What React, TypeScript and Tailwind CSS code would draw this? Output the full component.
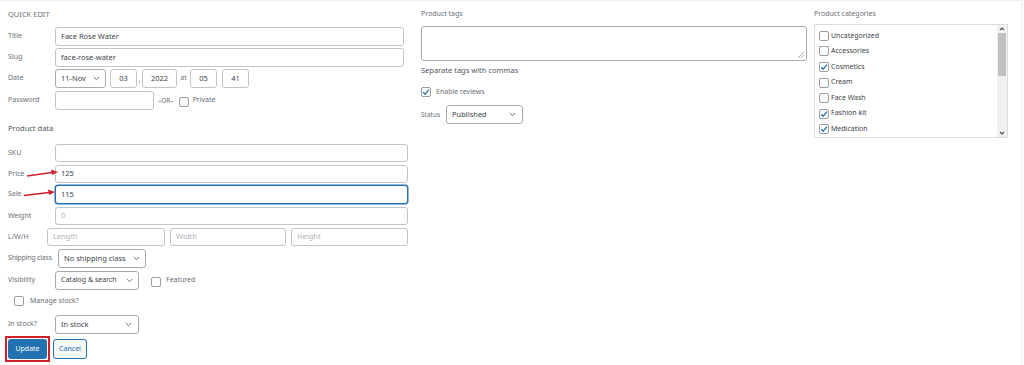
import React from "react";

const font = { fontFamily: '"Noto Sans", "Open Sans", sans-serif' };

function Chevron() {
  return (
    <svg width="7" height="5" viewBox="0 0 7 5" className="ml-auto shrink-0">
      <path d="M0.8 1 L3.5 3.7 L6.2 1" fill="none" stroke="#6b7075" strokeWidth="1" />
    </svg>
  );
}

function Box({ checked = false }: { checked?: boolean }) {
  return (
    <span className="relative inline-flex h-[10px] w-[10px] shrink-0 rounded-[2px] border border-[#9a9da1] bg-white">
      {checked && (
        <svg width="10" height="10" viewBox="0 0 10 10" className="absolute left-[-1px] top-[-1px]">
          <path d="M2.2 5.2 L4.1 7.2 L8 2.6" fill="none" stroke="#2271b1" strokeWidth="1.3" />
        </svg>
      )}
    </span>
  );
}

function Input({ value = "", placeholder = "", className = "", focus = false }: { value?: string; placeholder?: string; className?: string; focus?: boolean }) {
  return (
    <div
      className={`flex items-center rounded-[3px] border bg-white px-[5px] text-[7.5px] ${
        focus ? "border-[#2271b1] shadow-[0_0_0_0.5px_#2271b1]" : "border-[#c3c4c7]"
      } ${className}`}
    >
      {value ? <span className="text-[#3c434a]">{value}</span> : <span className="text-[#b0b3b6]">{placeholder}</span>}
    </div>
  );
}

function Select({ value, className = "" }: { value: string; className?: string }) {
  return (
    <div className={`flex items-center whitespace-nowrap rounded-[3px] border border-[#a7aaad] bg-white pl-[5px] pr-[5px] text-[7.5px] text-[#3c434a] ${className}`}>
      <span>{value}</span>
      <Chevron />
    </div>
  );
}

function Label({ children, w = "w-[47px]" }: { children: React.ReactNode; w?: string }) {
  return <span className={`${w} shrink-0 whitespace-nowrap text-[7px] text-[#6b7075]`}>{children}</span>;
}

export default function App() {
  const cats: [string, boolean][] = [
    ["Uncategorized", false],
    ["Accessories", false],
    ["Cosmetics", true],
    ["Cream", false],
    ["Face Wash", false],
    ["Fashion kit", true],
    ["Medication", true],
  ];
  const small = "flex h-[19px] items-center justify-center rounded-[3px] border border-[#c3c4c7] text-[7.5px] text-[#3c434a]";
  return (
    <div className="relative h-[365px] w-[1024px] overflow-hidden bg-white" style={font}>
      <div className="flex h-[365px] w-[1022px] border-t border-r border-[#eeeeee]">
        {/* Left column */}
        <div className="flex w-[413px] shrink-0 flex-col pl-[8px]">
          <div className="mt-[8px] h-[10px] text-[7.5px] leading-[10px] text-[#6b7075]">QUICK EDIT</div>
          <div className="mt-[8px] flex h-[19px] items-center">
            <Label>Title</Label>
            <Input value="Face Rose Water" className="h-[19px] w-[349px]" />
          </div>
          <div className="mt-[2px] flex h-[19px] items-center">
            <Label>Slug</Label>
            <Input value="face-rose-water" className="h-[19px] w-[349px]" />
          </div>
          <div className="mt-[2px] flex h-[19px] items-center">
            <Label>Date</Label>
            <Select value="11-Nov" className="h-[19px] w-[51px]" />
            <div className={`ml-[4px] w-[27px] ${small}`}>03</div>
            <span className="w-[5px] text-center text-[8px] text-[#6b7075]">,</span>
            <div className={`w-[35px] ${small}`}>2022</div>
            <span className="w-[13px] text-center text-[7px] text-[#6b7075]">at</span>
            <div className={`w-[27px] ${small}`}>05</div>
            <span className="w-[5px]" />
            <div className={`w-[27px] ${small}`}>41</div>
          </div>
          <div className="mt-[3px] flex h-[19px] items-center">
            <Label>Password</Label>
            <Input className="h-[19px] w-[99px]" />
            <span className="ml-[4px] text-[6.5px] text-[#6b7075]">–OR–</span>
            <span className="ml-[5px]"><Box /></span>
            <span className="ml-[4px] text-[7px] text-[#6b7075]">Private</span>
          </div>
          <div className="mt-[12px] h-[12px] text-[7.5px] leading-[12px] text-[#50575e]">Product data</div>
          <div className="mt-[10px] flex h-[18px] items-center">
            <Label>SKU</Label>
            <Input className="h-[18px] w-[353px]" />
          </div>
          <div className="mt-[3px] flex h-[18px] items-center">
            <Label>Price</Label>
            <Input value="125" className="h-[18px] w-[353px]" />
          </div>
          <div className="mt-[2px] flex h-[19px] items-center">
            <Label>Sale</Label>
            <Input value="115" focus className="h-[19px] w-[353px]" />
          </div>
          <div className="mt-[3px] flex h-[18px] items-center">
            <Label>Weight</Label>
            <Input placeholder="0" className="h-[18px] w-[353px]" />
          </div>
          <div className="mt-[3px] flex h-[18px] items-center">
            <Label w="w-[39px]">L/W/H</Label>
            <Input placeholder="Length" className="h-[18px] w-[118px]" />
            <Input placeholder="Width" className="ml-[5px] h-[18px] w-[116px]" />
            <Input placeholder="Height" className="ml-[5px] h-[18px] w-[117px]" />
          </div>
          <div className="mt-[3px] flex h-[19px] items-center">
            <span className="w-[50px] shrink-0 whitespace-nowrap text-[7px] tracking-[-0.2px] text-[#6b7075]">Shipping class</span>
            <Select value="No shipping class" className="h-[19px] w-[88px]" />
          </div>
          <div className="mt-[3px] flex h-[19px] items-center">
            <Label>Visibility</Label>
            <Select value="Catalog & search" className="h-[19px] w-[84px] text-[7px]" />
            <span className="ml-[12px]"><Box /></span>
            <span className="ml-[5px] text-[7px] text-[#6b7075]">Featured</span>
          </div>
          <div className="mt-[5px] flex h-[12px] items-center pl-[6px]">
            <Box />
            <span className="ml-[6px] text-[7px] text-[#6b7075]">Manage stock?</span>
          </div>
          <div className="mt-[8px] flex h-[19px] items-center">
            <Label>In stock?</Label>
            <Select value="In stock" className="h-[19px] w-[84px] pr-[6px]" />
          </div>
          <div className="mt-[5px] flex h-[20px] items-center">
            <div className="relative">
              <div className="flex h-[20px] w-[39px] items-center justify-center rounded-[3px] bg-[#2271b1] text-[7px] text-white">Update</div>
              <div className="pointer-events-none absolute left-[-3px] top-[-3px] h-[26px] w-[45px] border-2 border-[#d0202c]" />
            </div>
            <div className="ml-[6px] flex h-[20px] w-[34px] items-center justify-center rounded-[3px] border border-[#2271b1] bg-[#f6f7f7] text-[7px] text-[#2271b1]">Cancel</div>
          </div>
        </div>

        {/* Middle column */}
        <div className="flex w-[393px] shrink-0 flex-col pl-[8px]">
          <div className="mt-[8px] h-[10px] text-[7px] leading-[10px] text-[#6b7075]">Product tags</div>
          <div className="relative mt-[7px] h-[35px] w-[386px] rounded-[3px] border border-[#a7aaad] bg-white">
            <svg width="8" height="8" viewBox="0 0 8 8" className="absolute bottom-[1px] right-[1px]">
              <path d="M7 1 L1 7 M7 4 L4 7" stroke="#a7aaad" strokeWidth="1" />
            </svg>
          </div>
          <div className="mt-[3px] h-[12px] text-[7.5px] leading-[12px] text-[#50575e]">Separate tags with commas</div>
          <div className="mt-[10px] flex h-[12px] items-center">
            <Box checked />
            <span className="ml-[5px] text-[7px] text-[#6b7075]">Enable reviews</span>
          </div>
          <div className="mt-[7px] flex h-[19px] items-center">
            <span className="w-[25px] text-[6.5px] text-[#6b7075]">Status</span>
            <Select value="Published" className="h-[19px] w-[77px] pr-[6px]" />
          </div>
        </div>

        {/* Right column */}
        <div className="flex flex-col pl-[8px]">
          <div className="mt-[8px] h-[10px] text-[7px] leading-[10px] text-[#6b7075]">Product categories</div>
          <div className="mt-[5px] flex h-[114px] w-[194px] border border-[#dcdcde] bg-white">
            <div className="flex flex-1 flex-col pl-[4px] pt-[3px]">
              {cats.map(([name, c]) => (
                <div key={name} className="flex h-[15.6px] items-center">
                  <Box checked={c} />
                  <span className="ml-[2px] text-[7px] text-[#3c434a]">{name}</span>
                </div>
              ))}
            </div>
            <div className="flex w-[10px] flex-col items-center bg-[#f1f1f1]">
              <svg width="6" height="8" viewBox="0 0 6 8"><path d="M1 5 L3 3 L5 5" fill="none" stroke="#505050" strokeWidth="1.2" /></svg>
              <div className="h-[43px] w-[8px] bg-[#c1c1c1]" />
              <div className="flex-1" />
              <svg width="6" height="8" viewBox="0 0 6 8"><path d="M1 3 L3 5 L5 3" fill="none" stroke="#505050" strokeWidth="1.2" /></svg>
            </div>
          </div>
        </div>
      </div>

      {/* annotation arrows */}
      <svg className="pointer-events-none absolute left-0 top-0" width="80" height="220" viewBox="0 0 80 220">
        <g stroke="#d0202c" strokeWidth="1.6" fill="#d0202c">
          <line x1="27" y1="176" x2="52" y2="172.5" />
          <polygon points="58,172 51,169.5 52,175" stroke="none" />
          <line x1="24" y1="195.5" x2="49" y2="192.5" />
          <polygon points="55,192 48,189.5 49,195" stroke="none" />
        </g>
      </svg>
    </div>
  );
}
